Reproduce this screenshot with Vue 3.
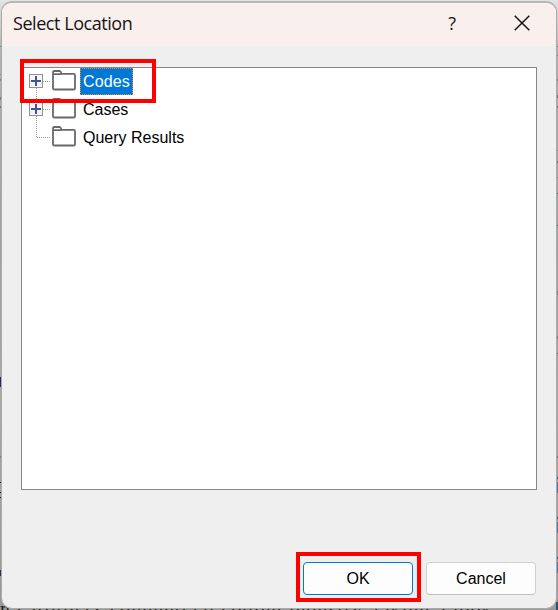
<script setup>
const rows = [
  { label: 'Codes', expandable: true, selected: true },
  { label: 'Cases', expandable: true, selected: false },
  { label: 'Query Results', expandable: false, selected: false },
]
const leftMarks = [
  { y: 46, h: 1, c: '#858585' }, { y: 74, h: 1, c: '#a48359' }, { y: 79, h: 2, c: '#858585' },
  { y: 97, h: 3, c: '#7d7d7d' }, { y: 106, h: 2, c: '#777' }, { y: 377, h: 10, c: '#292968' },
  { y: 456, h: 2, c: '#858585' }, { y: 482, h: 1, c: '#222' }, { y: 492, h: 1, c: '#222' },
  { y: 497, h: 1, c: '#222' }, { y: 570, h: 6, c: '#29304f' },
]
const rightMarks = [
  { y: 46, h: 1, c: '#858585' }, { y: 55, h: 1, c: '#858585' }, { y: 79, h: 2, c: '#858585' },
  { y: 95, h: 3, c: '#777' }, { y: 106, h: 2, c: '#777' }, { y: 150, h: 1, c: '#8c8c8c' },
  { y: 161, h: 2, c: '#6c6c6c' }, { y: 177, h: 1, c: '#858585' }, { y: 193, h: 1, c: '#416a8c' },
  { y: 225, h: 1, c: '#416a8c' }, { y: 291, h: 4, c: '#858585' }, { y: 336, h: 3, c: '#808080' },
  { y: 353, h: 1, c: '#6c6c6c' }, { y: 456, h: 2, c: '#777' }, { y: 477, h: 2, c: '#27638e' },
  { y: 482, h: 11, c: '#477ba6' }, { y: 517, h: 2, c: '#27638e' }, { y: 522, h: 11, c: '#477ba6' },
  { y: 557, h: 2, c: '#27638e' }, { y: 562, h: 11, c: '#477ba6' }, { y: 602, h: 8, c: '#2f526e' },
]
</script>

<template>
  <div class="screen">
    <svg class="backdrop" width="558" height="610" shape-rendering="crispEdges">
      <rect v-for="m in leftMarks" :key="'l' + m.y" x="0" :y="m.y" width="2" :height="m.h" :fill="m.c" />
      <rect v-for="m in rightMarks" :key="'r' + m.y" x="556" :y="m.y" width="2" :height="m.h" :fill="m.c" />
    </svg>
    <div class="document">n carolina's commercial coding industry. taking a look</div>
    <section class="dialog">
      <header class="titlebar">
        <span class="title">Select Location</span>
        <span class="help">?</span>
        <svg class="close" width="16" height="16" viewBox="0 0 16 16">
          <path d="M.7.7 15.3 15.3M15.3.7.7 15.3" fill="none" stroke="#111" stroke-width="1.45" />
        </svg>
      </header>
      <main class="tree">
        <div v-for="(row, i) in rows" :key="row.label" class="row">
          <svg class="branch" width="56" height="28" viewBox="0 0 56 28">
            <g stroke="#999" stroke-dasharray="1 1" fill="none" shape-rendering="crispEdges">
              <path v-if="i > 0" d="M14.5 0V14" />
              <path v-if="i < 2" d="M14.5 14V28" />
              <path d="M15 13.5H28" />
            </g>
            <g v-if="row.expandable" shape-rendering="crispEdges">
              <rect x="7.5" y="6.5" width="13" height="13" fill="#f5f5f5" stroke="#919191" />
              <path d="M9 13H19M14 8V18" stroke="#3c5499" stroke-width="2" />
            </g>
            <path d="M31 20.5V4.2Q31 3 32.2 3H37.5Q38.4 3 38.8 4L39.4 5.8H51.5Q53 5.8 53 7.3V20.5Q53 21.5 51.5 21.5H32.5Q31 21.5 31 20.5ZM31 6.2H39.5" fill="#fff" stroke="#696969" stroke-width="1.8" />
          </svg>
          <span class="label" :class="{ selected: row.selected }">{{ row.label }}</span>
        </div>
      </main>
      <footer class="actions">
        <button class="button primary">OK</button>
        <button class="button">Cancel</button>
      </footer>
    </section>
    <div class="highlight codes"></div>
    <div class="highlight confirm"></div>
  </div>
</template>

<style>
body { margin: 0; overflow: hidden; }
</style>

<style scoped>
.screen {
  position: relative;
  box-sizing: border-box;
  width: 558px;
  height: 610px;
  padding: 1px 0 0;
  overflow: hidden;
  background: linear-gradient(#e4e4e4 0, #b2b2b2 50px, #a0a0a0 250px, #a8a8a8 400px, #999 610px);
  font-family: "Liberation Sans", Arial, sans-serif;
}
.backdrop { position: absolute; left: 0; top: 0; }
.document {
  position: absolute;
  left: 0;
  top: 598px;
  width: 555px;
  height: 22px;
  overflow: hidden;
  color: #222;
  font: 20px/22px "Liberation Serif", serif;
  letter-spacing: 1.1px;
  white-space: nowrap;
}
.dialog {
  position: relative;
  box-sizing: border-box;
  width: 556px;
  height: 608px;
  margin-left: 1px;
  display: flex;
  flex-direction: column;
  overflow: hidden;
  border: solid #a9aba9;
  border-top-color: #b6b8b6;
  border-width: 2px 1px 1px;
  border-radius: 11px;
  background: #efefef;
}
.titlebar {
  display: flex;
  align-items: center;
  flex: none;
  box-sizing: border-box;
  height: 43px;
  padding: 0 26.5px 3px 11px;
  background: #f9f0ed;
  color: #151515;
  font-family: "Open Sans", "Noto Sans", sans-serif;
}
.title { width: 121px; font-size: 18px; letter-spacing: -.45px; white-space: nowrap; }
.help { margin-left: auto; margin-right: 57.5px; font-size: 18px; }
.close { flex: none; }
.tree {
  box-sizing: border-box;
  flex: none;
  width: 516px;
  height: 423px;
  margin: 21px 0 0 19px;
  border: 1px solid #828790;
  background: #fff;
}
.row { display: flex; height: 28px; }
.branch { flex: none; }
.label {
  box-sizing: border-box;
  height: 27px;
  margin-left: 2px;
  padding: 0 3px;
  font-size: 16px;
  line-height: 27px;
  color: #000;
  white-space: nowrap;
}
.selected {
  width: 53px;
  padding: 0 2px;
  border: 1px dotted #f08728;
  line-height: 25px;
  background: #0078d7;
  letter-spacing: .1px;
  color: #fff;
}
.actions { display: flex; justify-content: flex-end; gap: 13px; padding: 72px 20px 0 0; }
.button {
  box-sizing: border-box;
  width: 110px;
  height: 33px;
  padding: 0;
  border: 1px solid #d0d0d0;
  border-bottom-color: #bfbfbf;
  border-radius: 4px;
  background: #fdfdfd;
  color: #000;
  font: 16px "Liberation Sans", Arial, sans-serif;
}
.primary { border-color: #0078d4; }
.highlight { position: absolute; box-sizing: border-box; border: 4px solid #f00; pointer-events: none; }
.codes { left: 20px; top: 59px; width: 136px; height: 44px; }
.confirm { left: 296px; top: 552px; width: 125px; height: 50px; }
</style>
